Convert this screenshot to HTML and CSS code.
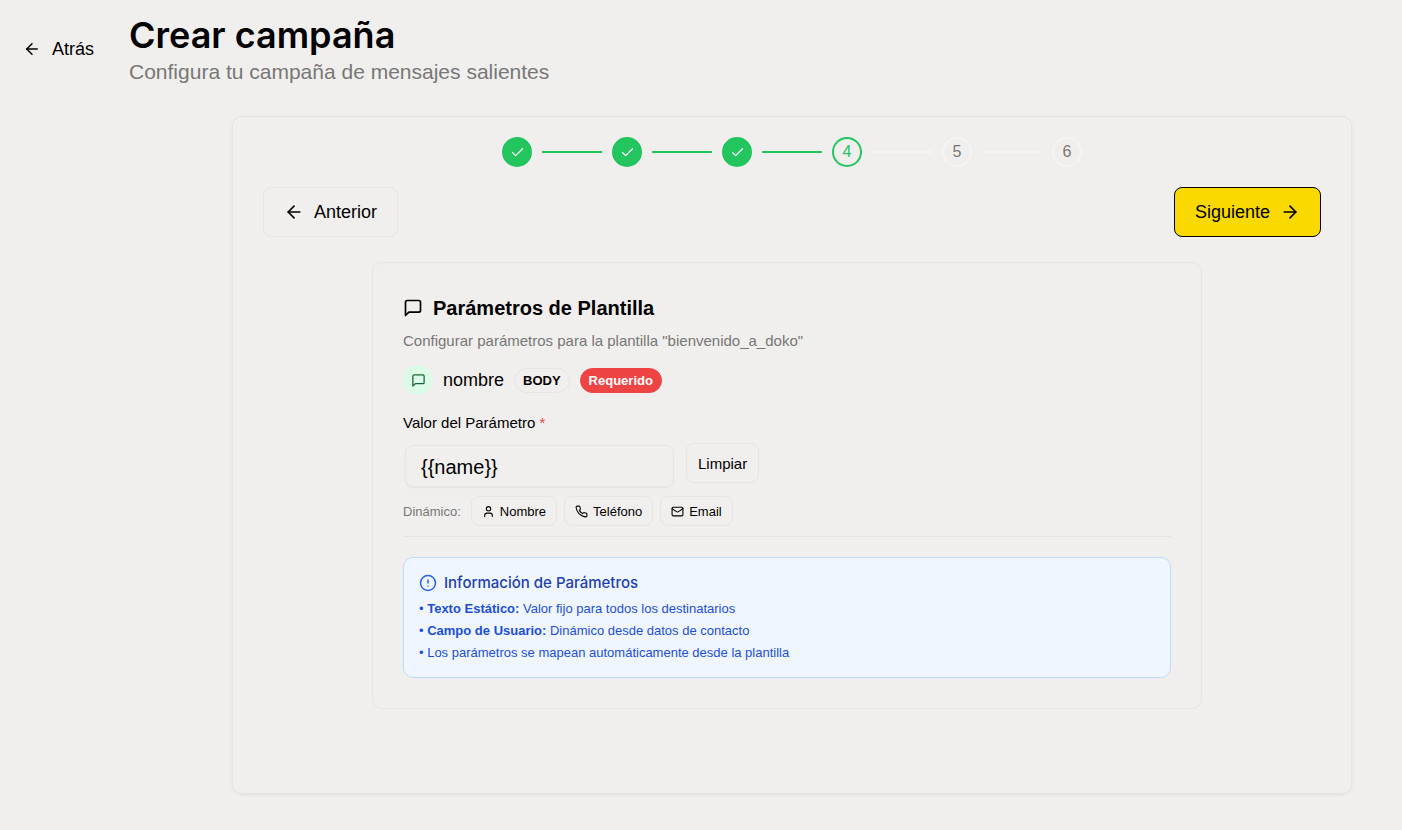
FILE: index.html
```html
<!DOCTYPE html>
<html lang="es">
<head>
  <meta charset="UTF-8">
  <meta name="viewport" content="width=device-width, initial-scale=1.0">
  <title>Crear campaña</title>
  <link rel="stylesheet" href="styles.css">
</head>
<body>
  <header class="page-header">
    <button type="button" class="back-btn">
      <svg class="icon" width="18" height="18" viewBox="0 0 24 24"><path d="m12 19-7-7 7-7"/><path d="M19 12H5"/></svg>
      Atrás
    </button>
    <div>
      <h1>Crear campaña</h1>
      <p class="subtitle">Configura tu campaña de mensajes salientes</p>
    </div>
  </header>

  <main class="wizard">
    <ol class="steps">
      <li class="step done"><svg class="icon" width="15" height="15" viewBox="0 0 24 24"><path d="M20 6 9 17l-5-5"/></svg></li>
      <li class="line done"></li>
      <li class="step done"><svg class="icon" width="15" height="15" viewBox="0 0 24 24"><path d="M20 6 9 17l-5-5"/></svg></li>
      <li class="line done"></li>
      <li class="step done"><svg class="icon" width="15" height="15" viewBox="0 0 24 24"><path d="M20 6 9 17l-5-5"/></svg></li>
      <li class="line done"></li>
      <li class="step current">4</li>
      <li class="line"></li>
      <li class="step">5</li>
      <li class="line"></li>
      <li class="step">6</li>
    </ol>

    <div class="nav">
      <button type="button" class="btn btn-prev">
        <svg class="icon" width="20" height="20" viewBox="0 0 24 24"><path d="m12 19-7-7 7-7"/><path d="M19 12H5"/></svg>
        Anterior
      </button>
      <button type="button" class="btn btn-next">
        Siguiente
        <svg class="icon" width="20" height="20" viewBox="0 0 24 24"><path d="M5 12h14"/><path d="m12 5 7 7-7 7"/></svg>
      </button>
    </div>

    <div class="content">
      <section class="card">
        <h2>
          <svg class="icon" width="20" height="20" viewBox="0 0 24 24"><path d="M21 15a2 2 0 0 1-2 2H7l-4 4V5a2 2 0 0 1 2-2h14a2 2 0 0 1 2 2z"/></svg>
          Parámetros de Plantilla
        </h2>
        <p class="description">Configurar parámetros para la plantilla "bienvenido_a_doko"</p>

        <div class="param">
          <span class="param-icon">
            <svg class="icon" width="15" height="15" viewBox="0 0 24 24"><path d="M21 15a2 2 0 0 1-2 2H7l-4 4V5a2 2 0 0 1 2-2h14a2 2 0 0 1 2 2z"/></svg>
          </span>
          <span class="param-name">nombre</span>
          <span class="badge">BODY</span>
          <span class="badge badge-required">Requerido</span>
        </div>

        <label class="field-label" for="param-value">Valor del Parámetro <span class="asterisk">*</span></label>
        <div class="field">
          <input type="text" id="param-value" value="{{name}}">
          <button type="button" class="btn-clear">Limpiar</button>
        </div>

        <div class="dynamic">
          <span class="dynamic-label">Dinámico:</span>
          <button type="button" class="chip">
            <svg class="icon" width="13" height="13" viewBox="0 0 24 24"><circle cx="12" cy="7" r="4"/><path d="M19 21v-2a4 4 0 0 0-4-4H9a4 4 0 0 0-4 4v2"/></svg>
            Nombre
          </button>
          <button type="button" class="chip">
            <svg class="icon" width="13" height="13" viewBox="0 0 24 24"><path d="M22 16.92v3a2 2 0 0 1-2.18 2 19.79 19.79 0 0 1-8.63-3.07 19.5 19.5 0 0 1-6-6 19.79 19.79 0 0 1-3.07-8.67A2 2 0 0 1 4.11 2h3a2 2 0 0 1 2 1.72c.13.96.36 1.9.7 2.81a2 2 0 0 1-.45 2.11L8.09 9.91a16 16 0 0 0 6 6l1.27-1.27a2 2 0 0 1 2.11-.45c.91.34 1.85.57 2.81.7A2 2 0 0 1 22 16.92z"/></svg>
            Teléfono
          </button>
          <button type="button" class="chip">
            <svg class="icon" width="13" height="13" viewBox="0 0 24 24"><rect x="2" y="4" width="20" height="16" rx="2"/><path d="m22 7-8.97 5.7a2 2 0 0 1-2.06 0L2 7"/></svg>
            Email
          </button>
        </div>

        <div class="info">
          <h3>
            <svg class="icon" width="18" height="18" viewBox="0 0 24 24"><circle cx="12" cy="12" r="10"/><path d="M12 8v4"/><path d="M12 16h.01"/></svg>
            Información de Parámetros
          </h3>
          <p>• <strong>Texto Estático:</strong> Valor fijo para todos los destinatarios</p>
          <p>• <strong>Campo de Usuario:</strong> Dinámico desde datos de contacto</p>
          <p>• Los parámetros se mapean automáticamente desde la plantilla</p>
        </div>
      </section>
    </div>
  </main>
</body>
</html>
```
FILE: styles.css
```css
* {
  box-sizing: border-box;
  margin: 0;
  padding: 0;
}
body {
  background: #f1efed;
  color: #000;
  font-family: "Liberation Sans", Arial, sans-serif;
}
button, input {
  font-family: inherit;
  color: inherit;
  background: transparent;
  border: 1px solid #e6e5e3;
  border-radius: 8px;
}
button {
  display: flex;
  align-items: center;
  justify-content: center;
  cursor: pointer;
}
.icon {
  flex-shrink: 0;
  fill: none;
  stroke: currentColor;
  stroke-width: 2;
  stroke-linecap: round;
  stroke-linejoin: round;
}
.page-header {
  display: flex;
  align-items: center;
  gap: 35px;
  padding: 12px 23px 0;
}
.back-btn {
  gap: 11px;
  border: none;
  font-size: 18px;
}
h1 {
  font-family: Inter, sans-serif;
  font-size: 36px;
  font-weight: 600;
  line-height: 46px;
}
.subtitle {
  color: #777;
  font-size: 21px;
  line-height: 28px;
}
.wizard {
  margin: 30px 50px 36px 232px;
  padding: 20px 30px;
  min-height: calc(100vh - 152px);
  border: 1px solid #e6e5e3;
  border-radius: 10px;
  box-shadow: 0 1px 3px rgba(0, 0, 0, 0.06);
}
.steps {
  display: flex;
  align-items: center;
  justify-content: center;
  gap: 10px;
  list-style: none;
}
.step {
  display: flex;
  align-items: center;
  justify-content: center;
  width: 30px;
  height: 30px;
  border: 2px solid #f5f4f3;
  border-radius: 50%;
  color: #777;
  font-size: 16px;
}
.step.done {
  background: #22c55e;
  border-color: #22c55e;
  color: #fff;
}
.step.current {
  border-color: #22c55e;
  color: #22c55e;
}
.line {
  width: 60px;
  height: 2px;
  background: #f5f4f3;
}
.line.done {
  background: #22c55e;
}
.nav {
  display: flex;
  justify-content: space-between;
  margin-top: 20px;
}
.btn {
  gap: 10px;
  height: 50px;
  padding: 0 20px;
  font-size: 18px;
}
.btn-next {
  background: #fad900;
  border-color: #000;
}
.content {
  margin-top: 25px;
  padding-right: 10px;
}
.card {
  max-width: 830px;
  margin: 0 auto;
  padding: 30px;
  border: 1px solid #e6e5e3;
  border-radius: 10px;
}
h2 {
  display: flex;
  align-items: center;
  gap: 10px;
  font-size: 20px;
  line-height: 30px;
}
.description {
  margin-top: 6px;
  color: #777;
  font-size: 15px;
  line-height: 24px;
}
.param {
  display: flex;
  align-items: center;
  gap: 10px;
  margin-top: 12px;
}
.param-icon {
  display: flex;
  align-items: center;
  justify-content: center;
  width: 30px;
  height: 30px;
  border-radius: 50%;
  background: #dcfce7;
  color: #166534;
}
.param-name {
  font-size: 18px;
}
.badge {
  padding: 0 8px;
  border: 1px solid #e6e5e3;
  border-radius: 13px;
  font-size: 13px;
  font-weight: bold;
  line-height: 23px;
}
.badge-required {
  background: #ef4444;
  border-color: #ef4444;
  color: #fff;
}
.field-label {
  display: block;
  margin-top: 16px;
  font-size: 15px;
  line-height: 24px;
}
.asterisk {
  color: #ef4444;
}
.field {
  display: flex;
  align-items: flex-start;
  gap: 10px;
  margin-top: 8px;
}
.field input {
  width: 269px;
  height: 42px;
  margin: 2px;
  padding: 2px 15px 0;
  font-size: 20px;
  box-shadow: 0 1px 2px rgba(0, 0, 0, 0.05);
}
.btn-clear {
  height: 40px;
  padding: 0 11px;
  font-size: 15px;
}
.dynamic {
  display: flex;
  align-items: center;
  gap: 7px;
  margin-top: 7px;
  padding-bottom: 10px;
  border-bottom: 1px solid #e6e5e3;
  font-size: 13px;
}
.dynamic-label {
  margin-right: 3px;
  color: #777;
}
.chip {
  gap: 5px;
  height: 30px;
  padding: 0 10px;
  font-size: 13px;
}
.info {
  margin-top: 20px;
  padding: 14px 15px 13px;
  border: 1px solid #bfdbfe;
  border-radius: 10px;
  background: #eff6ff;
  color: #1d4ed8;
  font-size: 13px;
  line-height: 22px;
}
.info h3 {
  display: flex;
  align-items: center;
  gap: 7px;
  margin-bottom: 4px;
  color: #1e40af;
  font-family: Inter, sans-serif;
  font-size: 15px;
  font-weight: 500;
}
.info h3 .icon {
  color: #2563eb;
}
```
